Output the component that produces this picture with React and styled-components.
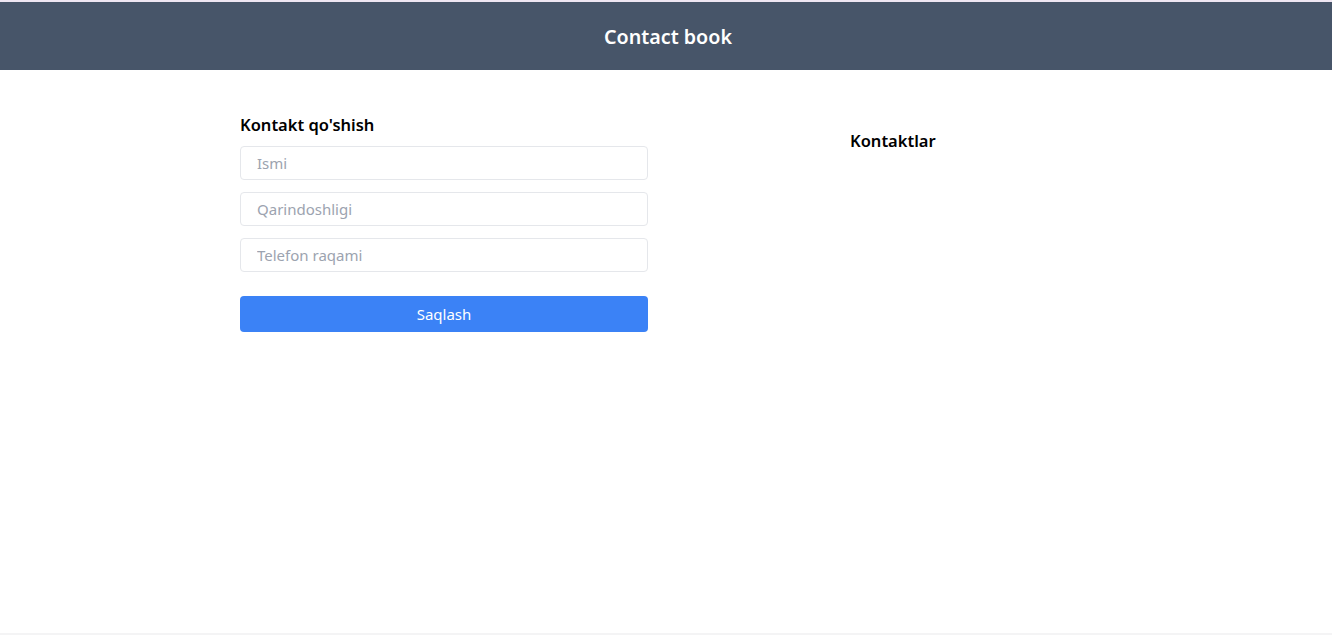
import styled, { createGlobalStyle } from 'styled-components'

const GlobalStyle = createGlobalStyle`
  * {
    box-sizing: border-box;
  }
  body {
    margin: 0;
    font-family: "Noto Sans", "Open Sans", sans-serif;
    color: #000;
    background: #fff;
  }
`

const Page = styled.div`
  min-height: 100vh;
  border-top: 2px solid #efe6f2;
  border-bottom: 2px solid #f4f4f5;
`

const Header = styled.header`
  height: 68px;
  background: #475569;
  display: flex;
  align-items: center;
  justify-content: center;
`

const Title = styled.h1`
  margin: 0 0 0 4px;
  font-size: 19.7px;
  font-weight: 600;
  color: #fff;
`

const Main = styled.main`
  width: 852px;
  margin: 0 auto;
  padding-top: 41px;
  display: grid;
  grid-template-columns: 408px 1fr;
  column-gap: 202px;
  align-items: start;
`

const Heading = styled.h2`
  margin: ${p => (p.$offset ? '16px 0 0' : '0 0 7px')};
  font-size: 16.5px;
  line-height: 28px;
  font-weight: 600;
`

const Form = styled.form`
  display: flex;
  flex-direction: column;
  gap: 12px;
`

const Input = styled.input`
  height: 34px;
  width: 100%;
  border: 1px solid #e5e7eb;
  border-radius: 4px;
  padding: 0 16px;
  font-family: inherit;
  font-size: 15px;
  outline: none;

  &::placeholder {
    color: #9ca3af;
  }
`

const Button = styled.button`
  margin-top: 12px;
  height: 36px;
  border: none;
  border-radius: 4px;
  background: #3b82f6;
  color: #fff;
  font-family: inherit;
  font-size: 15px;
  cursor: pointer;
`

export default function App () {
  return (
    <Page>
      <GlobalStyle />
      <Header>
        <Title>Contact book</Title>
      </Header>
      <Main>
        <section>
          <Heading>Kontakt qo'shish</Heading>
          <Form onSubmit={e => e.preventDefault()}>
            <Input placeholder='Ismi' />
            <Input placeholder='Qarindoshligi' />
            <Input placeholder='Telefon raqami' />
            <Button type='submit'>Saqlash</Button>
          </Form>
        </section>
        <section>
          <Heading $offset>Kontaktlar</Heading>
        </section>
      </Main>
    </Page>
  )
}
